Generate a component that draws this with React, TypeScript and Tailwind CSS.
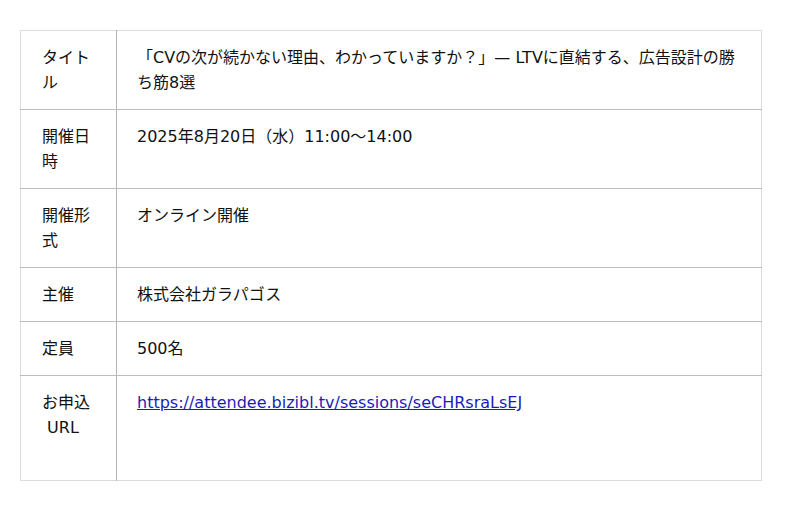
import React from 'react';

const rows: { label: React.ReactNode; value: React.ReactNode }[] = [
  {
    label: 'タイトル',
    value: '「CVの次が続かない理由、わかっていますか？」— LTVに直結する、広告設計の勝ち筋8選',
  },
  { label: '開催日時', value: '2025年8月20日（水）11:00〜14:00' },
  { label: '開催形式', value: 'オンライン開催' },
  { label: '主催', value: '株式会社ガラパゴス' },
  { label: '定員', value: '500名' },
  {
    label: (
      <>
        お申込
        <br />
        &nbsp;URL
      </>
    ),
    value: (
      <>
        <a href="#" className="text-[#1c1cb4] underline">
          https://attendee.bizibl.tv/sessions/seCHRsraLsEJ
        </a>
        <div className="h-[51px]" />
      </>
    ),
  },
];

const App = () => {
  return (
    <div className="w-[800px] h-[510px] bg-white pt-[30px] px-[20px] font-['DejaVu_Sans','Noto_Sans_CJK_JP',sans-serif] text-[16px] leading-[25px] text-[#111]">
      <table className="w-[742px] border-collapse border border-[#dcdcdc]">
        <tbody>
          {rows.map((row, i) => (
            <tr key={i} className="border-t border-[#bdbdbd] first:border-t-[#dcdcdc]">
              <td className="w-[96px] align-top px-[21px] py-[14px] border-r border-[#b5b5b5]">
                {row.label}
              </td>
              <td className="align-top px-[20px] py-[14px]">{row.value}</td>
            </tr>
          ))}
        </tbody>
      </table>
    </div>
  );
};

export default App;
